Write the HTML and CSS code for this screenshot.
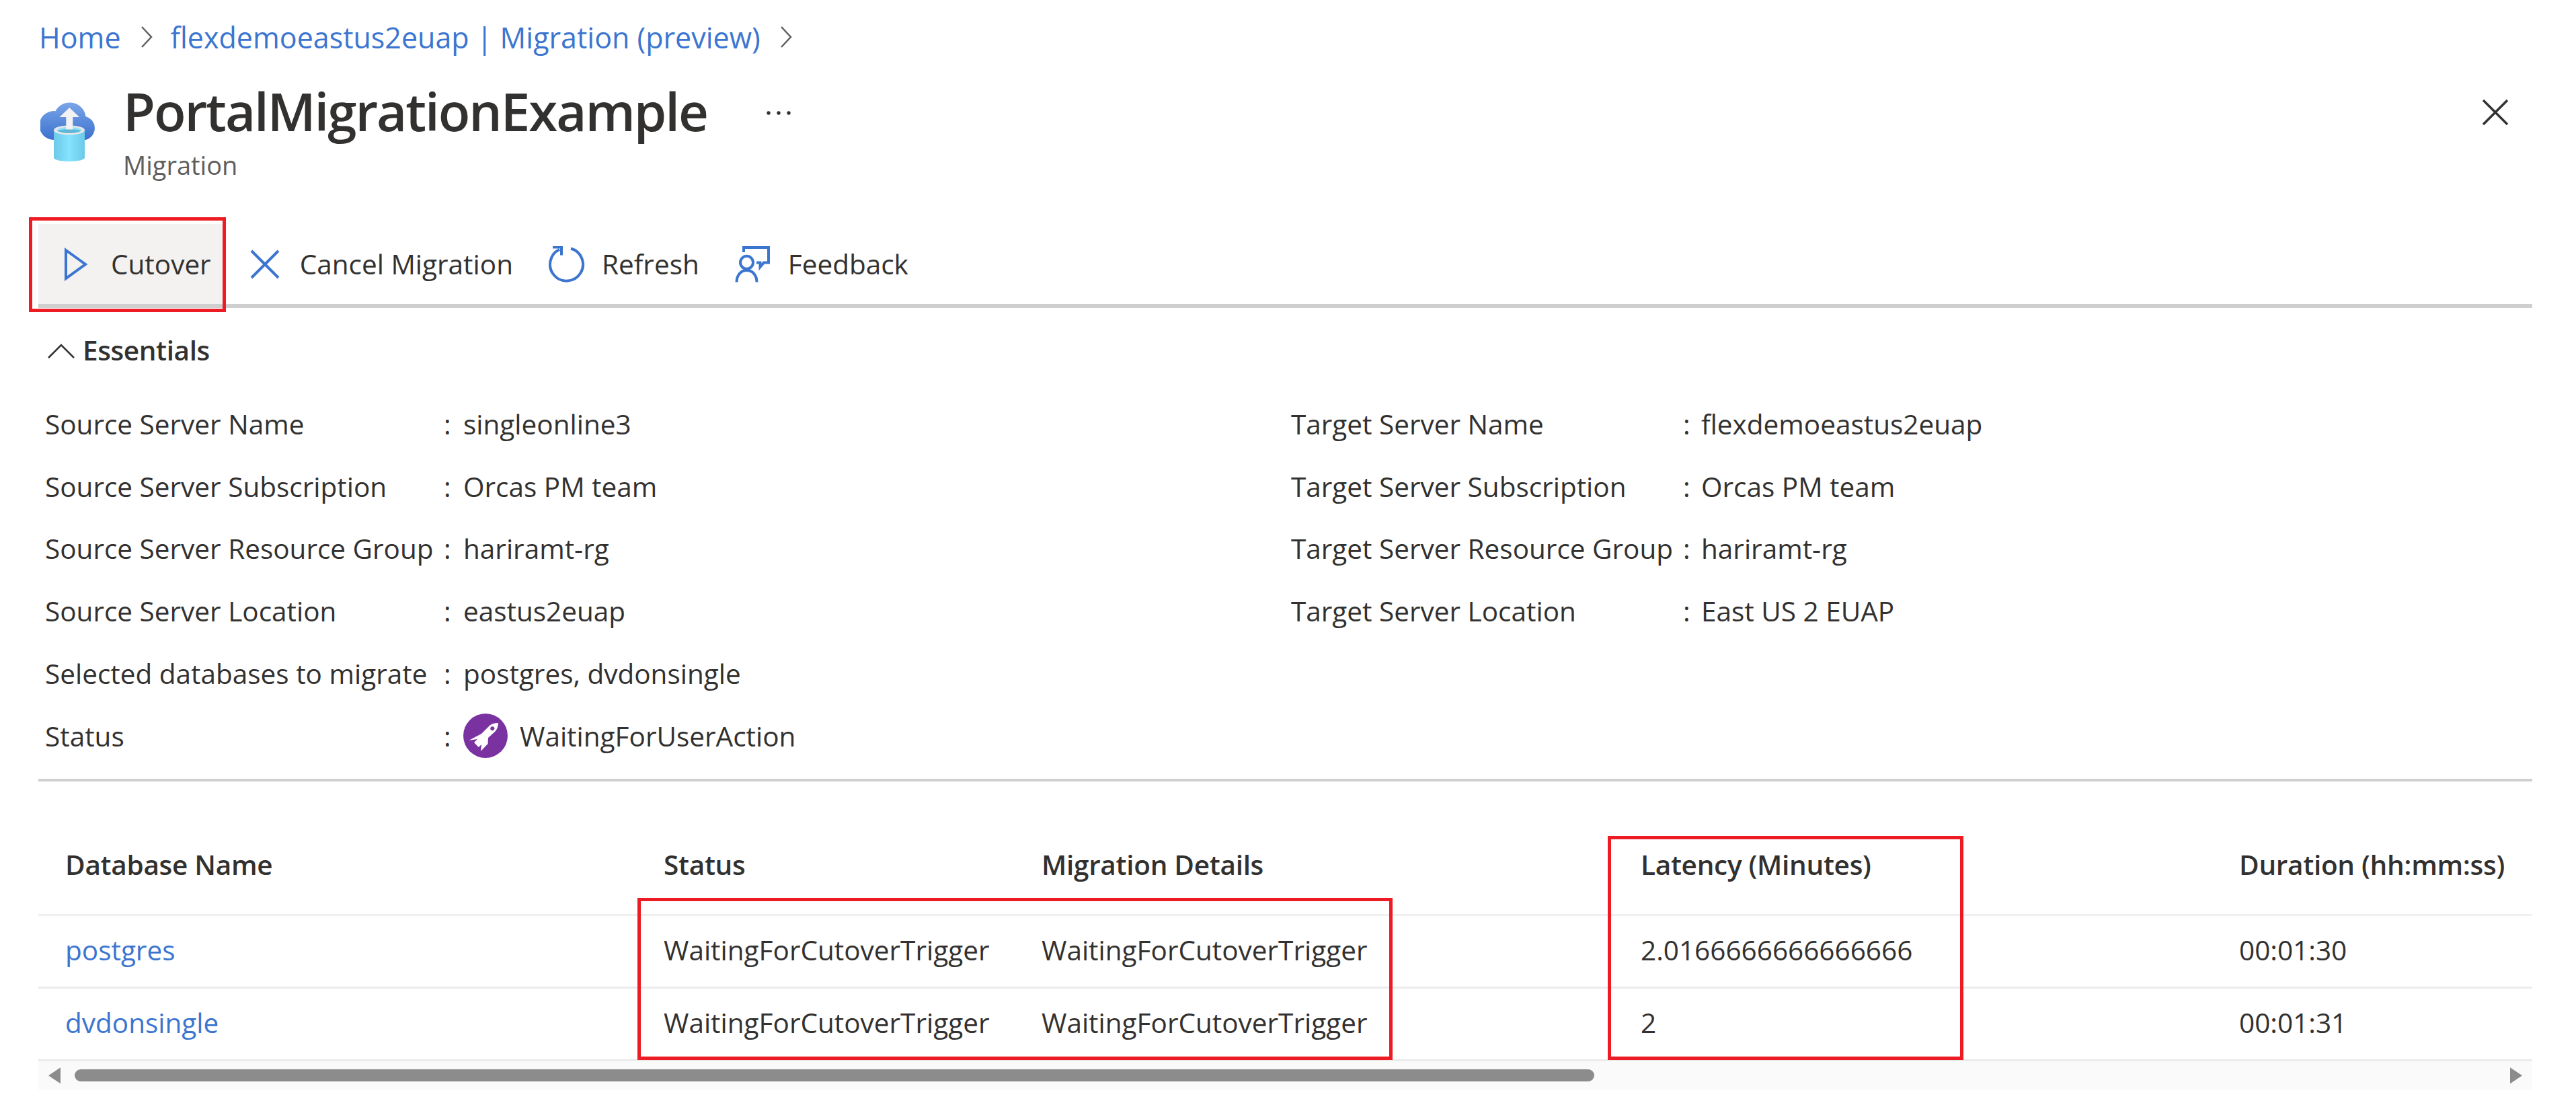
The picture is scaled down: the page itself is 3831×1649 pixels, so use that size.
FILE: index.html
```html
<!DOCTYPE html>
<html>

<head>
    <meta charset="utf-8">
    <title>PortalMigrationExample - Migration</title>
    <link rel="stylesheet" href="styles.css">
</head>

<body>
    <nav class="crumbs">
        <a href="#">Home</a>
        <svg class="crumb-sep" viewBox="0 0 18 32"><path d="M2 1l14 15L2 31" /></svg>
        <a href="#">flexdemoeastus2euap | Migration (preview)</a>
        <svg class="crumb-sep" viewBox="0 0 18 32"><path d="M2 1l14 15L2 31" /></svg>
    </nav>

    <header class="head">
        <svg class="head-icon" viewBox="0 0 86 92">
            <defs>
                <linearGradient id="cloud" x1="0" y1="0" x2="0" y2="1">
                    <stop offset="0" stop-color="#7aa5e8" />
                    <stop offset="1" stop-color="#3b72cf" />
                </linearGradient>
                <linearGradient id="can" x1="0" y1="0" x2="1" y2="0">
                    <stop offset="0" stop-color="#6cc9e8" />
                    <stop offset="0.5" stop-color="#86e3fd" />
                    <stop offset="1" stop-color="#6cc9e8" />
                </linearGradient>
            </defs>
            <path fill="url(#cloud)" d="M20 60a21.500 21.500 0 0 1 0-43c1 0 1.500 0 2.500.2a24 24 0 0 1 45 8a18 18 0 0 1 0 34.800z" />
            <path fill="url(#can)" d="M20 45.500v41c0 3 10 5.500 23 5.500s23-2.500 23-5.500v-41z" />
            <ellipse cx="43" cy="45.500" rx="23" ry="7" fill="#e6e6e6" />
            <ellipse cx="43" cy="45.500" rx="18" ry="4.500" fill="#8fe4fb" />
            <path fill="#5fb8d8" d="M25.500 46.500c3-1.500 10-2.500 17.500-2.500s14.500 1 17.500 2.500c-3 2-10 3.500-17.500 3.500s-14.500-1.500-17.500-3.500z" />
            <path fill="#f2f2f2" d="M43.300 12l14.700 14h-9.700v18.500h-10V26h-9.700z" />
        </svg>
        <div class="head-text">
            <div class="title-row">
                <h1>PortalMigrationExample</h1>
                <svg class="dots" viewBox="0 0 36 6"><circle cx="3" cy="3" r="2.700" /><circle cx="18" cy="3" r="2.700" /><circle cx="33" cy="3" r="2.700" /></svg>
            </div>
            <div class="sub">Migration</div>
        </div>
        <svg class="close" viewBox="0 0 40 40"><path d="M2 2l36 36M38 2L2 38" /></svg>
    </header>

    <div class="toolbar">
        <div class="tool tool-first">
            <svg class="tool-icon" viewBox="0 0 54 46"><path d="M12 2l29 21-29 21z" /></svg>
            <span>Cutover</span>
            <div class="mark mark-cutover"></div>
        </div>
        <div class="tool">
            <svg class="tool-icon" viewBox="0 0 54 46"><path d="M7 3l40 40M47 3L7 43" /></svg>
            <span>Cancel Migration</span>
        </div>
        <div class="tool">
            <svg class="tool-icon" viewBox="0 0 54 54"><path d="M33 3.500A24.500 24.500 0 1 1 16 5M6 1.500h13v12" /></svg>
            <span>Refresh</span>
        </div>
        <div class="tool">
            <svg class="tool-icon" viewBox="0 0 54 54"><path d="M13 9V2H50V24.500H43L37.500 31V24.500H32" /><circle cx="17.500" cy="24.300" r="9.500" /><path d="M2.500 53.500C2.500 43 9 36 17.500 36S32.500 43 32.500 53.500" /></svg>
            <span>Feedback</span>
        </div>
    </div>

    <section class="essentials">
        <div class="ess-head">
            <svg class="ess-chevron" viewBox="0 0 42 22"><path d="M2 21L21 2l19 19" /></svg>
            <span>Essentials</span>
        </div>
        <div class="ess-grid">
            <div class="ess-col">
                <div class="ess-row"><span>Source Server Name</span><span>:</span><span>singleonline3</span></div>
                <div class="ess-row"><span>Source Server Subscription</span><span>:</span><span>Orcas PM team</span></div>
                <div class="ess-row"><span>Source Server Resource Group</span><span>:</span><span>hariramt-rg</span></div>
                <div class="ess-row"><span>Source Server Location</span><span>:</span><span>eastus2euap</span></div>
                <div class="ess-row"><span>Selected databases to migrate</span><span>:</span><span>postgres, dvdonsingle</span></div>
                <div class="ess-row"><span>Status</span><span>:</span>
                    <span class="status">
                        <svg class="rocket" viewBox="0 0 66 66">
                            <circle cx="33" cy="33" r="33" fill="#7a32a0" />
                            <path fill="#fff" d="M52 14C46 14 42 15.500 39 18L27 30L8.700 39.700L21 38L16 43L22.700 50L27 46L26 56L36.500 45L37 36L47 27C50 24 52 19 52 14Z" />
                            <circle cx="43.300" cy="22.300" r="3" fill="#7a32a0" />
                        </svg>
                        WaitingForUserAction
                    </span>
                </div>
            </div>
            <div class="ess-col ess-col-right">
                <div class="ess-row"><span>Target Server Name</span><span>:</span><span>flexdemoeastus2euap</span></div>
                <div class="ess-row"><span>Target Server Subscription</span><span>:</span><span>Orcas PM team</span></div>
                <div class="ess-row"><span>Target Server Resource Group</span><span>:</span><span>hariramt-rg</span></div>
                <div class="ess-row"><span>Target Server Location</span><span>:</span><span>East US 2 EUAP</span></div>
            </div>
        </div>
    </section>

    <div class="table-wrap">
        <table>
            <colgroup>
                <col class="c-name">
                <col class="c-status">
                <col class="c-details">
                <col class="c-latency">
                <col class="c-duration">
            </colgroup>
            <tr>
                <th>Database Name</th>
                <th>Status</th>
                <th>Migration Details</th>
                <th>Latency (Minutes)</th>
                <th>Duration (hh:mm:ss)</th>
            </tr>
            <tr>
                <td><a href="#">postgres</a></td>
                <td>WaitingForCutoverTrigger</td>
                <td>WaitingForCutoverTrigger</td>
                <td>2.0166666666666666</td>
                <td>00:01:30</td>
            </tr>
            <tr>
                <td><a href="#">dvdonsingle</a></td>
                <td>WaitingForCutoverTrigger</td>
                <td>WaitingForCutoverTrigger</td>
                <td>2</td>
                <td>00:01:31</td>
            </tr>
        </table>
        <div class="scrollbar">
            <div class="arrow arrow-left"></div>
            <div class="track"><div class="thumb"></div></div>
            <div class="arrow arrow-right"></div>
        </div>
        <div class="mark mark-status"></div>
        <div class="mark mark-latency"></div>
    </div>
</body>

</html>
```
FILE: styles.css
```css
body {
    margin: 0;
    background: #fff;
    color: #323130;
    font-family: "Open Sans", "Noto Sans", sans-serif;
    font-size: 40.5px;
}

a {
    color: #3b75d0;
    text-decoration: none;
}

.crumbs {
    display: flex;
    align-items: center;
    height: 110px;
    padding-left: 58px;
    font-size: 43px;
}

.crumb-sep {
    width: 18px;
    height: 32px;
    margin: 0 27px 0 29px;
    fill: none;
    stroke: #605e5c;
    stroke-width: 2.5;
}

.head {
    display: flex;
    height: 223px;
    padding: 0 100px 0 60px;
    box-sizing: border-box;
}

.head-icon {
    width: 86px;
    height: 92px;
    margin-top: 38px;
    flex: none;
}

.head-text {
    margin-left: 37px;
}

.title-row {
    display: flex;
    align-items: center;
    height: 110px;
}

h1 {
    margin: 0;
    font-size: 78px;
    font-weight: 600;
    letter-spacing: -2.05px;
}

.dots {
    width: 36px;
    height: 6px;
    margin: 5px 0 0 88px;
    fill: #323130;
}

.sub {
    margin-top: -1px;
    color: #605e5c;
    font-size: 38px;
}

.close {
    width: 40px;
    height: 40px;
    margin: 37px 0 0 auto;
    fill: none;
    stroke: #323130;
    stroke-width: 3.5;
}

.toolbar {
    display: flex;
    height: 125px;
    margin: 0 65px 0 57px;
    box-sizing: border-box;
    border-bottom: 6px solid #cfcfcf;
}

.tool {
    position: relative;
    display: flex;
    align-items: center;
    gap: 25px;
    padding: 0 20px 0 33px;
}

.tool-first {
    padding-left: 29px;
    background: #f3f2f1;
}

.tool-icon {
    width: 54px;
    height: 54px;
    fill: none;
    stroke: #3b75d0;
    stroke-width: 4;
}

.mark {
    position: absolute;
    box-sizing: border-box;
    border: 5px solid #ed1c24;
}

.mark-cutover {
    left: -14px;
    top: -10px;
    width: 293px;
    height: 141px;
}

.essentials {
    margin: 0 65px 0 57px;
    padding-bottom: 17px;
    border-bottom: 4px solid #cfcfcf;
}

.ess-head {
    display: flex;
    align-items: center;
    height: 126px;
    padding: 0 0 2px 13px;
    box-sizing: border-box;
    font-weight: 600;
    letter-spacing: -0.4px;
}

.ess-chevron {
    width: 42px;
    height: 22px;
    margin: 4px 11px 0 0;
    fill: none;
    stroke: #323130;
    stroke-width: 2.5;
}

.ess-grid {
    display: grid;
    grid-template-columns: 1853px 1fr;
    padding-left: 10px;
}

.ess-row {
    display: grid;
    grid-template-columns: 593px 29px 1fr;
    align-items: center;
    height: 92.8px;
}

.ess-col-right .ess-row {
    grid-template-columns: 583px 27px 1fr;
}

.status {
    display: flex;
    align-items: center;
    gap: 18px;
}

.rocket {
    width: 66px;
    height: 66px;
}

.table-wrap {
    position: relative;
    margin: 0 65px 0 57px;
}

table {
    width: 100%;
    table-layout: fixed;
    border-collapse: collapse;
}

.c-name { width: 890px; }
.c-status { width: 562px; }
.c-details { width: 891px; }
.c-latency { width: 890px; }

th,
td {
    padding: 0 0 0 40px;
    text-align: left;
    white-space: nowrap;
    border-bottom: 3px solid #f1f0ef;
}

th {
    height: 199px;
    padding-top: 50px;
    box-sizing: border-box;
    font-weight: 600;
    letter-spacing: -0.3px;
}

td {
    height: 108px;
    padding-bottom: 4px;
    box-sizing: border-box;
    border-bottom-color: #ebebeb;
}

.scrollbar {
    display: flex;
    align-items: center;
    height: 42px;
    padding: 0 15px;
    background: #fafafa;
}

.arrow {
    width: 18px;
    height: 24px;
    background: #8c8c8c;
}

.arrow-left {
    clip-path: polygon(100% 0, 100% 100%, 0 50%);
}

.arrow-right {
    clip-path: polygon(0 0, 0 100%, 100% 50%);
}

.track {
    flex: 1;
    padding-left: 21px;
}

.thumb {
    width: 2260px;
    height: 18px;
    border-radius: 9px;
    background: #8c8c8c;
}

.mark-status {
    left: 891px;
    top: 173px;
    width: 1123px;
    height: 241px;
}

.mark-latency {
    left: 2334px;
    top: 81px;
    width: 529px;
    height: 333px;
}
```
